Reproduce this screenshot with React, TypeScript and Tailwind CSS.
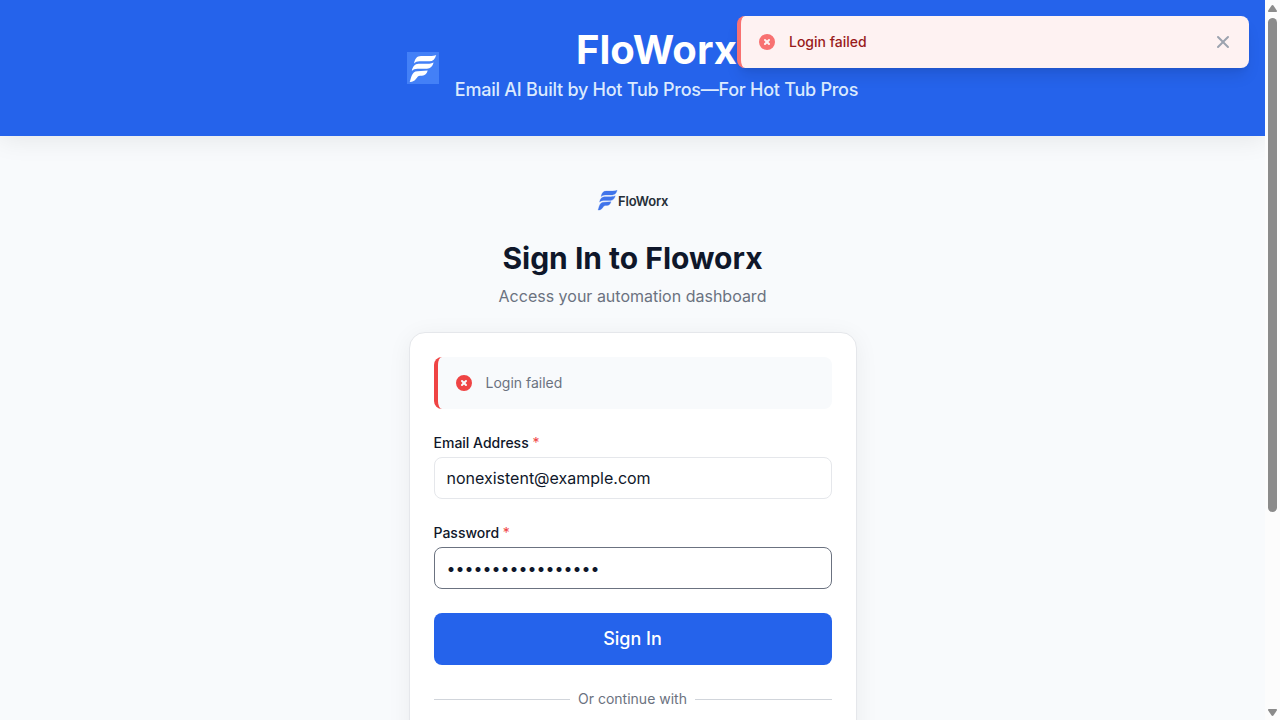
import type { ReactNode } from "react";

function ErrorIcon({ className }: { className: string }) {
  return (
    <svg viewBox="0 0 20 20" fill="currentColor" className={`size-5 shrink-0 ${className}`}>
      <path
        fillRule="evenodd"
        clipRule="evenodd"
        d="M10 18a8 8 0 100-16 8 8 0 000 16zM8.707 7.293a1 1 0 00-1.414 1.414L8.586 10l-1.293 1.293a1 1 0 101.414 1.414L10 11.414l1.293 1.293a1 1 0 001.414-1.414L11.414 10l1.293-1.293a1 1 0 00-1.414-1.414L10 8.586 8.707 7.293z"
      />
    </svg>
  );
}

function CloseIcon() {
  return (
    <svg viewBox="0 0 20 20" fill="currentColor" className="size-5">
      <path
        fillRule="evenodd"
        clipRule="evenodd"
        d="M4.293 4.293a1 1 0 011.414 0L10 8.586l4.293-4.293a1 1 0 111.414 1.414L11.414 10l4.293 4.293a1 1 0 01-1.414 1.414L10 11.414l-4.293 4.293a1 1 0 01-1.414-1.414L8.586 10 4.293 5.707a1 1 0 010-1.414z"
      />
    </svg>
  );
}

function Mark() {
  return (
    <>
      <path d="M7 11.500C8 6.500 9.800 4.100 14 4L23 4C25.500 4 27.500 3.700 29.200 2.900C28 7 26 9.200 22.500 9.300L12.500 9.300C10 9.400 8.500 10 7 11.500Z" />
      <path d="M4.800 19C5.800 14.500 7.600 11.900 11.500 11.800L20.500 11.700C23 11.700 24.800 11.400 26.600 10.500C25.500 14.500 23.500 16.700 20 16.800L10.500 16.800C8 16.900 6.300 17.500 4.800 19Z" />
      <path d="M2.700 30C4.200 27 4.200 19.300 10.500 19.200L20.700 18.500C19.800 21.700 18 23.600 15 23.700L13 23.700C9 24 9.500 30 2.700 30Z" />
    </>
  );
}

function Field({ label, type, value, className }: { label: string; type: string; value: string; className: string }) {
  return (
    <div>
      <label className="block h-5 text-sm leading-5 font-medium text-[#0f172a]">
        {label} <span className="font-normal text-[#ef4444]">*</span>
      </label>
      <input
        type={type}
        defaultValue={value}
        className={`mt-1 block h-[42px] w-full rounded-lg border bg-white px-3 text-base text-[#0f172a] outline-none ${className}`}
      />
    </div>
  );
}

function Rule({ children }: { children: ReactNode }) {
  return (
    <div className="mt-6 flex items-center gap-2 text-sm leading-5 text-[#6b7280]">
      <span className="h-px flex-1 bg-[#d1d5db]" />
      {children}
      <span className="h-px flex-1 bg-[#d1d5db]" />
    </div>
  );
}

function Scrollbar() {
  return (
    <div className="flex h-full w-[15px] shrink-0 flex-col items-center bg-[#fcfcfc]">
      <svg viewBox="0 0 15 18" className="h-[18px] w-[15px] shrink-0" fill="#8b8b8b">
        <path d="M7.500 5Q8.100 5 8.600 5.700L11.800 10.500Q12.300 12 11.300 12H3.700Q2.700 12 3.200 10.500L6.400 5.700Q6.900 5 7.500 5Z" />
      </svg>
      <div className="h-[494px] w-[9px] shrink-0 rounded-full bg-[#8b8b8b]" />
      <div className="flex-1" />
      <svg viewBox="0 0 15 18" className="h-[18px] w-[15px] shrink-0" fill="#8b8b8b">
        <path d="M7.500 14Q6.900 14 6.400 13.300L3.200 8.500Q2.700 7 3.700 7H11.300Q12.300 7 11.800 8.500L8.600 13.300Q8.100 14 7.500 14Z" />
      </svg>
    </div>
  );
}

export default function App() {
  return (
    <div className="relative flex h-[720px] w-full overflow-hidden bg-[#f8fafc] font-['Inter',sans-serif]">
      <div className="flex min-w-0 flex-1 flex-col">
        <header className="flex h-[136px] shrink-0 items-center justify-center gap-4 bg-[#2563eb] shadow-[0_4px_24px_rgba(0,0,0,0.08)]">
          <svg viewBox="0 0 32 32" className="size-8" fill="white">
            <rect width="32" height="32" fill="#4380f7" />
            <Mark />
          </svg>
          <div className="text-center">
            <h1 className="h-[51px] text-[40px] leading-[50px] font-bold text-white">FloWorx</h1>
            <p className="mb-[7px] h-7 text-lg leading-7 font-medium tracking-[-0.25px] text-[#dbeafe]">
              Email AI Built by Hot Tub Pros—For Hot Tub Pros
            </p>
          </div>
        </header>

        <main className="mx-auto w-[448px] shrink-0">
          <div className="mt-[53px] flex h-6 items-center justify-center">
            <svg viewBox="0 0 72 24" className="h-6 w-[72px]">
              <g transform="translate(-0.900 -0.800) scale(0.720 0.730)" fill="#3f73ea" stroke="#3f73ea" strokeWidth="0.400">
                <Mark />
              </g>
              <text x="21" y="16.500" textLength="50.500" fontSize="13" fontWeight="600" fill="#262f38" fontFamily="Inter">
                FloWorx
              </text>
            </svg>
          </div>
          <h2 className="mt-[27px] text-center text-3xl leading-9 font-bold text-[#0f172a]">Sign In to Floworx</h2>
          <p className="mt-2 text-center text-base leading-6 text-[#6b7280]">Access your automation dashboard</p>

          <section className="mt-6 h-[600px] rounded-2xl border border-[#e5e7eb] bg-white p-6 shadow-[0_4px_24px_rgba(0,0,0,0.06)]">
            <div className="mb-6 flex h-[52px] items-center gap-3 rounded-lg border-l-4 border-[#ef4444] bg-[#f8fafc] px-4">
              <ErrorIcon className="text-[#ef4444]" />
              <span className="text-sm leading-5 text-[#6b7280]">Login failed</span>
            </div>
            <div className="flex flex-col gap-6">
              <Field label="Email Address" type="text" value="nonexistent@example.com" className="border-[#e5e7eb]" />
              <Field label="Password" type="password" value="wrongpassword1234" className="border-[#6b7280]" />
              <button className="h-[52px] rounded-lg bg-[#2563eb] text-lg font-medium text-white">Sign In</button>
            </div>
            <Rule>Or continue with</Rule>
          </section>
        </main>
      </div>
      <Scrollbar />

      <div className="absolute top-4 right-[31px] flex h-[52px] w-[512px] items-center rounded-lg border-l-4 border-[#f87171] bg-[#fef2f2] px-4 shadow-[0_10px_15px_-3px_rgba(0,0,0,0.1),0_4px_6px_-4px_rgba(0,0,0,0.1)]">
        <ErrorIcon className="text-[#f87171]" />
        <span className="ml-3 flex-1 text-sm leading-5 font-medium text-[#991b1b]">Login failed</span>
        <button className="text-[#9ca3af]">
          <CloseIcon />
        </button>
      </div>
    </div>
  );
}
